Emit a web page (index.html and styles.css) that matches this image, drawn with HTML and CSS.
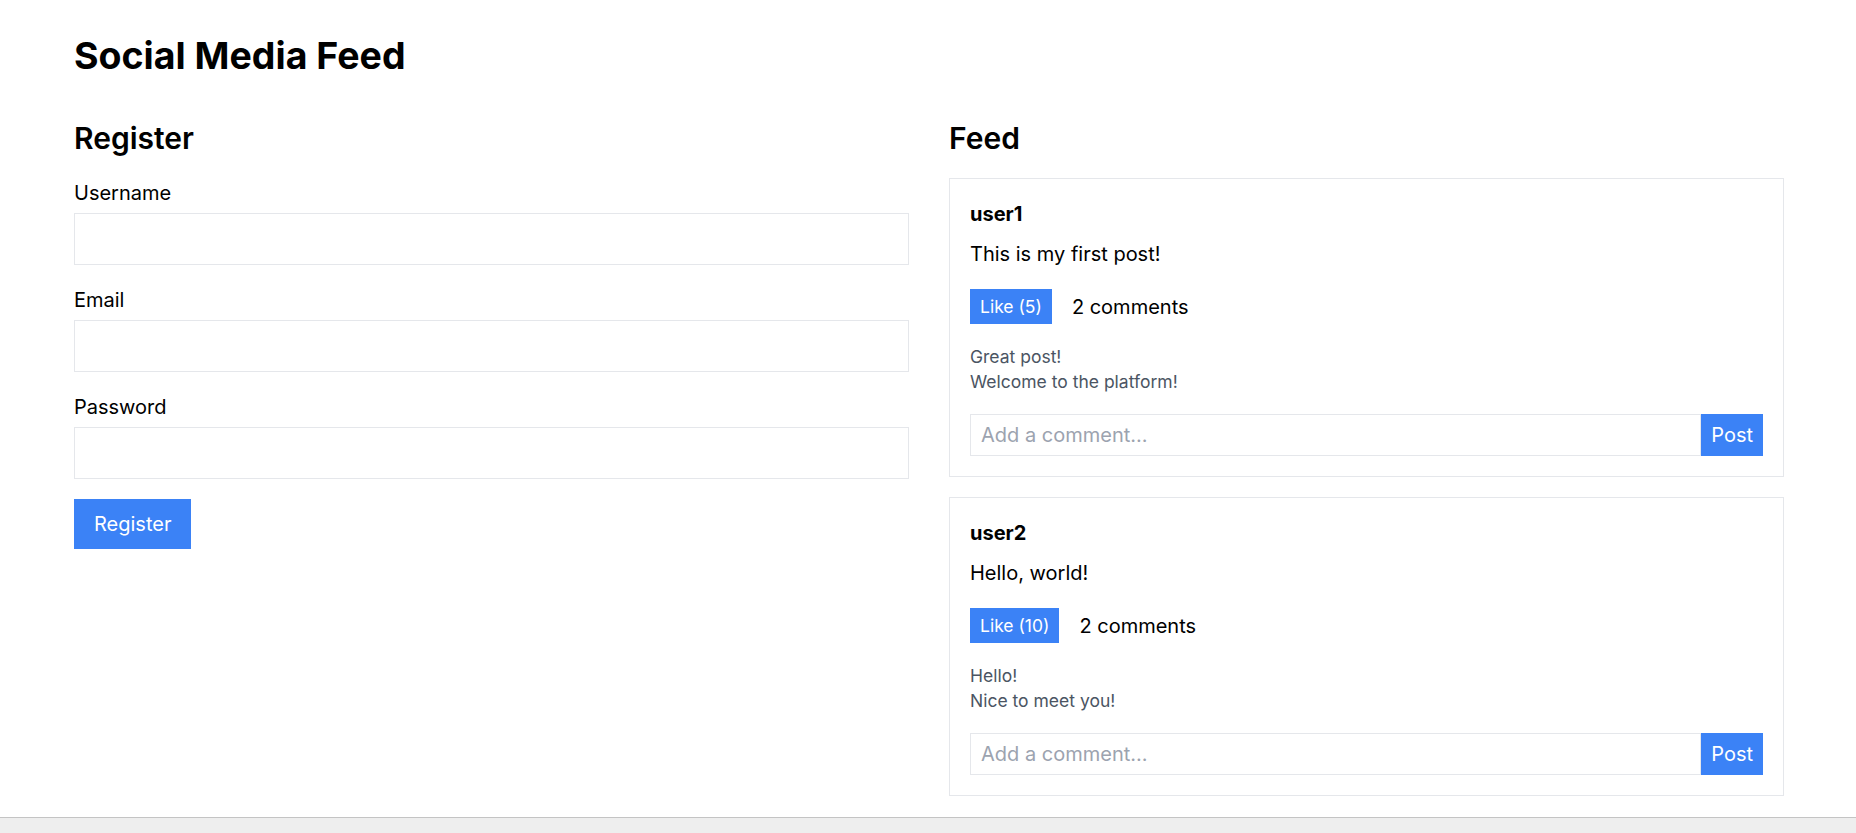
FILE: index.html
```html
<!DOCTYPE html>
<html lang="en">
<head>
<meta charset="utf-8">
<title>Social Media Feed</title>
<link rel="stylesheet" href="styles.css">
</head>
<body>
<div class="page">
  <h1 class="title">Social Media Feed</h1>
  <div class="columns">
    <section class="register">
      <h2 class="section-title">Register</h2>
      <form class="form">
        <div class="field">
          <label class="label">Username</label>
          <input class="input" type="text">
        </div>
        <div class="field">
          <label class="label">Email</label>
          <input class="input" type="email">
        </div>
        <div class="field">
          <label class="label">Password</label>
          <input class="input" type="password">
        </div>
        <button type="button" class="btn-primary">Register</button>
      </form>
    </section>
    <section class="feed">
      <h2 class="section-title">Feed</h2>
      <div class="post">
        <div class="post-user">user1</div>
        <p class="post-text">This is my first post!</p>
        <div class="post-actions">
          <button type="button" class="btn-like">Like (5)</button>
          <span class="comment-count">2 comments</span>
        </div>
        <div class="comments">
          <div class="comment">Great post!</div>
          <div class="comment">Welcome to the platform!</div>
        </div>
        <div class="comment-form">
          <input class="comment-input" type="text" placeholder="Add a comment...">
          <button type="button" class="btn-post">Post</button>
        </div>
      </div>
      <div class="post">
        <div class="post-user">user2</div>
        <p class="post-text">Hello, world!</p>
        <div class="post-actions">
          <button type="button" class="btn-like">Like (10)</button>
          <span class="comment-count">2 comments</span>
        </div>
        <div class="comments">
          <div class="comment">Hello!</div>
          <div class="comment">Nice to meet you!</div>
        </div>
        <div class="comment-form">
          <input class="comment-input" type="text" placeholder="Add a comment...">
          <button type="button" class="btn-post">Post</button>
        </div>
      </div>
    </section>
  </div>
</div>
<div class="taskbar"></div>
</body>
</html>
```

FILE: styles.css
```css
* { box-sizing: border-box; }

html, body {
  margin: 0;
  padding: 0;
  background: #ffffff;
  color: #000000;
  font-family: Inter, "Noto Sans", "Liberation Sans", sans-serif;
}

.page {
  padding: 33px 72px 0 74px;
}

.title {
  margin: 0 0 40px;
  font-size: 37.5px;
  line-height: 45px;
  font-weight: 700;
}

.columns {
  display: grid;
  grid-template-columns: 1fr 1fr;
  column-gap: 40px;
  align-items: start;
}

.section-title {
  margin: 0 0 20px;
  font-size: 30px;
  line-height: 40px;
  font-weight: 600;
}

.form {
  display: flex;
  flex-direction: column;
  align-items: flex-start;
}

.field {
  display: flex;
  flex-direction: column;
  width: 100%;
  margin-bottom: 20px;
}

.label {
  font-size: 20px;
  line-height: 30px;
  margin-bottom: 5px;
}

.input {
  width: 100%;
  height: 52px;
  border: 1px solid #e5e7eb;
  padding: 10px 10px;
  font-family: inherit;
  font-size: 20px;
  line-height: 30px;
  outline: none;
  background: #fff;
}

.btn-primary {
  background: #3b82f6;
  color: #ffffff;
  border: none;
  padding: 10px 20px;
  font-family: inherit;
  font-size: 20px;
  line-height: 30px;
  cursor: pointer;
}

.post {
  border: 1px solid #e5e7eb;
  padding: 20px;
  margin-bottom: 20px;
}

.post-user {
  font-size: 20px;
  line-height: 30px;
  font-weight: 700;
  margin-bottom: 10px;
}

.post-text {
  margin: 0 0 20px;
  font-size: 20px;
  line-height: 30px;
}

.post-actions {
  display: flex;
  align-items: center;
  gap: 20px;
}

.btn-like {
  background: #3b82f6;
  color: #ffffff;
  border: none;
  padding: 5px 10px;
  font-family: inherit;
  font-size: 17.5px;
  line-height: 25px;
  cursor: pointer;
}

.comment-count {
  font-size: 20px;
  line-height: 30px;
}

.comments {
  margin-top: 20px;
}

.comment {
  font-size: 17.5px;
  line-height: 25px;
  color: #4b5563;
}

.comment-form {
  display: flex;
  margin-top: 20px;
}

.comment-input {
  flex: 1;
  min-width: 0;
  border: 1px solid #e5e7eb;
  padding: 5px 10px;
  font-family: inherit;
  font-size: 20px;
  line-height: 30px;
  outline: none;
}

.comment-input::placeholder {
  color: #9ca3af;
}

.btn-post {
  background: #3b82f6;
  color: #ffffff;
  border: none;
  padding: 5px 10px;
  font-family: inherit;
  font-size: 20px;
  line-height: 30px;
  cursor: pointer;
}

.taskbar {
  position: fixed;
  left: 0;
  right: 0;
  bottom: 0;
  height: 16px;
  background: #eeeeee;
  border-top: 1px solid #c4c4c4;
}
```
